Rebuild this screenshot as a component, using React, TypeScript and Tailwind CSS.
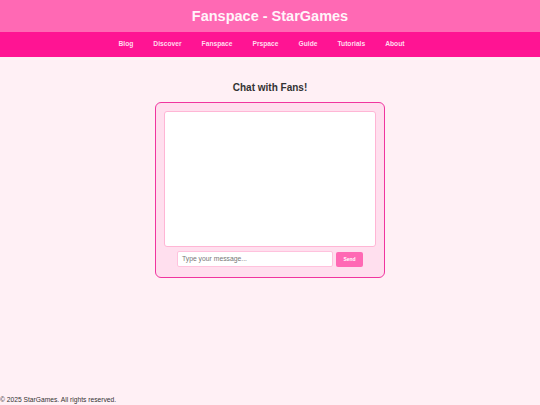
import React from "react";

export default function App() {
  const links = ["Blog", "Discover", "Fanspace", "Prspace", "Guide", "Tutorials", "About"];
  return (
    <div
      className="w-[540px] h-[405px] bg-[#fff0f5] flex flex-col overflow-hidden"
      style={{ fontFamily: '"Liberation Sans", Arial, sans-serif' }}
    >
      <header className="h-[32px] bg-[#ff69b4] flex items-center justify-center">
        <h1 className="text-[14.5px] font-bold text-[#fff5fa] leading-none">Fanspace - StarGames</h1>
      </header>
      <nav className="h-[25px] bg-[#ff1493] flex items-center justify-center pr-[17px]">
        <ul className="flex gap-[20px]">
          {links.map((l) => (
            <li key={l} className="text-[6.7px] font-bold text-[#ffdcee] leading-none">
              {l}
            </li>
          ))}
        </ul>
      </nav>
      <main className="flex-1 flex flex-col items-center">
        <h2 className="mt-[26px] text-[10px] font-bold text-[#333333] leading-none">Chat with Fans!</h2>
        <div className="mt-[9px] w-[230px] h-[176px] bg-[#ffdfee] border-[1.5px] border-[#f0359f] rounded-[6px] p-[8px] flex flex-col">
          <div className="h-[136px] bg-white border border-[#ffb6d5] rounded-[3px]"></div>
          <div className="mt-[4px] flex items-center justify-center gap-[3px]">
            <div className="w-[156px] h-[16px] bg-white border border-[#ffc2dd] rounded-[2px] flex items-center px-[4px]">
              <span className="text-[6.8px] text-[#777777] leading-none">Type your message...</span>
            </div>
            <div className="w-[27px] h-[15px] bg-[#ff69b4] rounded-[2px] flex items-center justify-center">
              <span className="text-[5px] font-bold text-white leading-none">Send</span>
            </div>
          </div>
        </div>
      </main>
      <footer className="h-[10px] flex items-center">
        <span className="text-[6.7px] text-[#333333] leading-none">© 2025 StarGames. All rights reserved.</span>
      </footer>
    </div>
  );
}
